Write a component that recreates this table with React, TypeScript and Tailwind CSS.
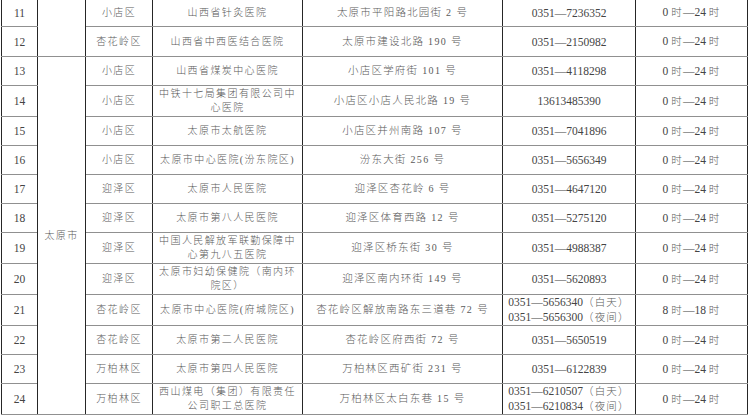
type Row = {
  no: number;
  district: string;
  hospital: string[];
  address: string;
  phone: string[];
  hours: string;
  h: number;
};

const rows: Row[] = [
  { no: 11, district: "小店区", hospital: ["山西省针灸医院"], address: "太原市平阳路北园街 2 号", phone: ["0351—7236352"], hours: "0 时—24 时", h: 28 },
  { no: 12, district: "杏花岭区", hospital: ["山西省中西医结合医院"], address: "太原市建设北路 190 号", phone: ["0351—2150982"], hours: "0 时—24 时", h: 30 },
  { no: 13, district: "小店区", hospital: ["山西省煤炭中心医院"], address: "小店区学府街 101 号", phone: ["0351—4118298"], hours: "0 时—24 时", h: 29 },
  { no: 14, district: "小店区", hospital: ["中铁十七局集团有限公司中", "心医院"], address: "小店区小店人民北路 19 号", phone: ["13613485390"], hours: "0 时—24 时", h: 31 },
  { no: 15, district: "小店区", hospital: ["太原市太航医院"], address: "小店区并州南路 107 号", phone: ["0351—7041896"], hours: "0 时—24 时", h: 29 },
  { no: 16, district: "小店区", hospital: ["太原市中心医院(汾东院区)"], address: "汾东大街 256 号", phone: ["0351—5656349"], hours: "0 时—24 时", h: 29 },
  { no: 17, district: "迎泽区", hospital: ["太原市人民医院"], address: "迎泽区杏花岭 6 号", phone: ["0351—4647120"], hours: "0 时—24 时", h: 29 },
  { no: 18, district: "迎泽区", hospital: ["太原市第八人民医院"], address: "迎泽区体育西路 12 号", phone: ["0351—5275120"], hours: "0 时—24 时", h: 29 },
  { no: 19, district: "迎泽区", hospital: ["中国人民解放军联勤保障中", "心第九八五医院"], address: "迎泽区桥东街 30 号", phone: ["0351—4988387"], hours: "0 时—24 时", h: 31 },
  { no: 20, district: "迎泽区", hospital: ["太原市妇幼保健院（南内环", "院区）"], address: "迎泽区南内环街 149 号", phone: ["0351—5620893"], hours: "0 时—24 时", h: 31 },
  { no: 21, district: "杏花岭区", hospital: ["太原市中心医院(府城院区)"], address: "杏花岭区解放南路东三道巷 72 号", phone: ["0351—5656340（白天）", "0351—5656300（夜间）"], hours: "8 时—18 时", h: 30 },
  { no: 22, district: "杏花岭区", hospital: ["太原市第二人民医院"], address: "杏花岭区府西街 72 号", phone: ["0351—5650519"], hours: "0 时—24 时", h: 29 },
  { no: 23, district: "万柏林区", hospital: ["太原市第四人民医院"], address: "万柏林区西矿街 231 号", phone: ["0351—6122839"], hours: "0 时—24 时", h: 29 },
  { no: 24, district: "万柏林区", hospital: ["西山煤电（集团）有限责任", "公司职工总医院"], address: "万柏林区太白东巷 15 号", phone: ["0351—6210507（白天）", "0351—6210834（夜间）"], hours: "0 时—24 时", h: 30 },
];

const cell =
  "border-x border-x-[#262626] border-y border-y-[#909090] text-center align-middle p-0 overflow-hidden whitespace-nowrap";
const cn = "text-[10px] tracking-[1.4px] leading-[14px] text-[#5a5a5a] font-light";
const num = "text-[11.5px] leading-[14px] text-[#444]";

// split a mixed string so the Chinese parts get the lighter, spaced look
function Mixed({ text }: { text: string }) {
  const parts = text.split(/([\u3000-\u9fff\uff00-\uffef]+)/).filter(Boolean);
  return (
    <>
      {parts.map((p, i) =>
        /[\u3000-\u9fff\uff00-\uffef]/.test(p) ? (
          <span key={i} className="text-[10.5px] tracking-[1.2px] text-[#5a5a5a] font-light">
            {p}
          </span>
        ) : (
          <span key={i}>{p}</span>
        )
      )}
    </>
  );
}

export default function App() {
  return (
    <div className="w-[750px] h-[415px] overflow-hidden bg-white font-['Liberation_Serif','Noto_Sans_CJK_SC',serif]">
      <table className="table-fixed border-collapse w-[746px] ml-[1px] -mt-[2px]">
        <colgroup>
          <col className="w-[36px]" />
          <col className="w-[48px]" />
          <col className="w-[67px]" />
          <col className="w-[150px]" />
          <col className="w-[200px]" />
          <col className="w-[133px]" />
          <col className="w-[112px]" />
        </colgroup>
        <tbody>
          {rows.map((r, i) => (
            <tr key={r.no} style={{ height: r.h }} className={r.no === 13 ? "border-t border-t-[#222]" : ""}>
              <td className={`${cell} ${num}`}>{r.no}</td>
              {i === 0 && <td rowSpan={2} className={cell} />}
              {i === 2 && (
                <td rowSpan={12} className={`${cell} ${cn}`}>
                  太原市
                </td>
              )}
              <td className={`${cell} ${cn}`}>{r.district}</td>
              <td className={`${cell} ${cn}`}>
                {r.hospital.map((l) => (
                  <div key={l}>{l}</div>
                ))}
              </td>
              <td className={`${cell} ${cn}`}>
                <Mixed text={r.address} />
              </td>
              <td className={`${cell} ${num}`}>
                {r.phone.map((p) => (
                  <div key={p}>
                    <Mixed text={p} />
                  </div>
                ))}
              </td>
              <td className={`${cell} ${num}`}>
                <Mixed text={r.hours} />
              </td>
            </tr>
          ))}
        </tbody>
      </table>
    </div>
  );
}
